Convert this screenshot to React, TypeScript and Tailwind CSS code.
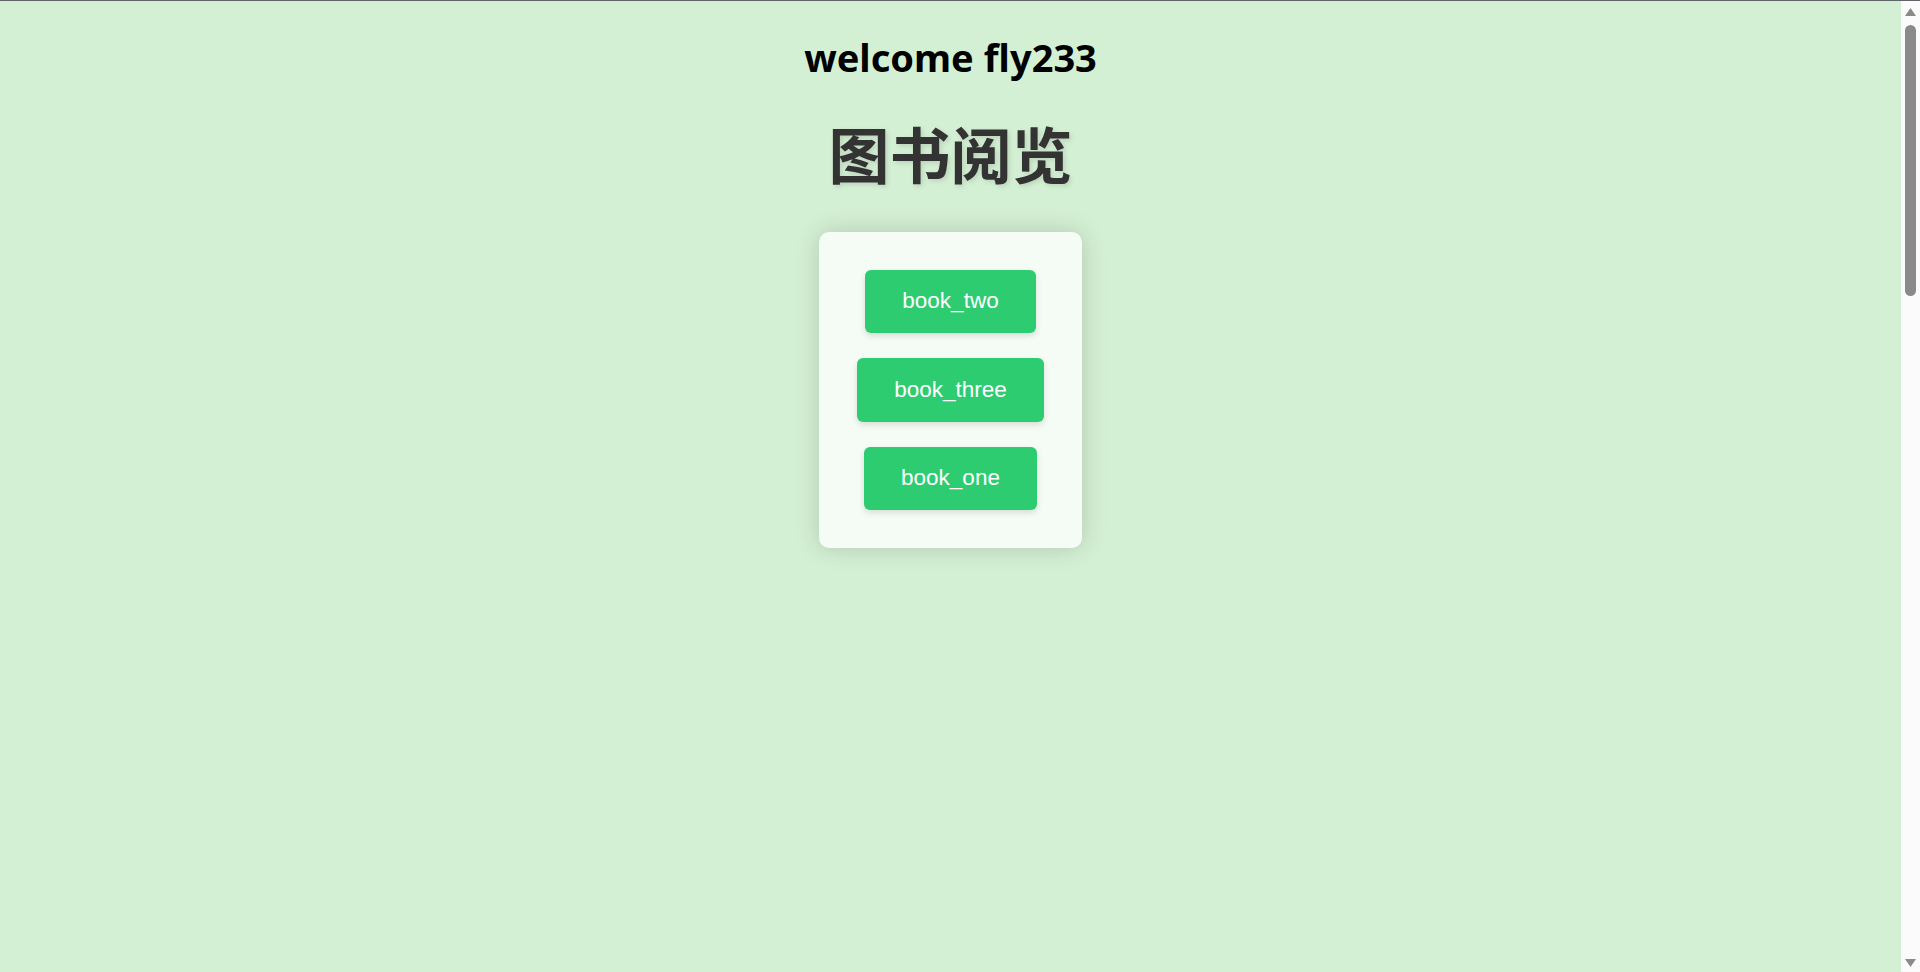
export default function App() {
  const books = ["book_two", "book_three", "book_one"];

  return (
    <div className="flex h-screen overflow-hidden border-t border-[#5f6368] bg-[#d4f0d4]">
      <div className="flex flex-1 flex-col items-center">
        <h1 className="pt-[30px] text-[38px] leading-[52px] font-bold text-black [font-family:'Noto_Sans','Open_Sans',sans-serif]">
          welcome fly233
        </h1>
        <h2 className="mt-[35px] text-[61px] leading-[70px] font-bold text-[#333333] [font-family:'Noto_Sans_CJK_SC',sans-serif] [text-shadow:2px_2px_5px_rgba(0,0,0,0.12)]">
          图书阅览
        </h2>

        <div className="mt-[44px] flex w-[263px] flex-col items-center gap-[25px] rounded-[10px] bg-[#f5fbf5] py-[37.5px] shadow-[0_0_24px_rgba(0,0,0,0.17)]">
          {books.map((b) => (
            <button
              key={b}
              className="rounded-[6px] bg-[#2ecc71] px-[37.5px] py-[18.75px] text-[22.5px] leading-[26px] text-white shadow-[0_3px_6px_rgba(0,0,0,0.12)] [font-family:'Liberation_Sans',Arial,sans-serif]"
            >
              {b}
            </button>
          ))}
        </div>
      </div>

      {/* scrollbar */}
      <div className="flex w-[19px] flex-col items-center bg-[#fbfbfb] pt-[6px] pb-[4px]">
        <svg width="13" height="10" viewBox="0 0 13 10" className="shrink-0">
          <polygon points="6.5,1 12,9 1,9" fill="#8a8a8a" />
        </svg>
        <div className="mt-[8px] h-[271px] w-[11px] rounded-full bg-[#8a8a8a]" />
        <div className="flex-1" />
        <svg width="13" height="10" viewBox="0 0 13 10" className="shrink-0">
          <polygon points="1,1 12,1 6.5,9" fill="#8a8a8a" />
        </svg>
      </div>
    </div>
  );
}
